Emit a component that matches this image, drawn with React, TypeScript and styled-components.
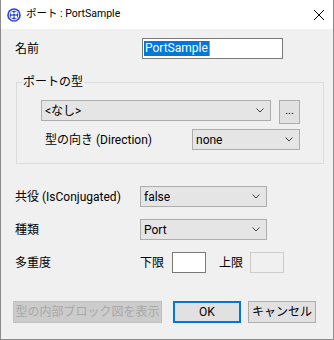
import styled, { createGlobalStyle } from "styled-components";

const GlobalStyle = createGlobalStyle`
    html, body {
        margin: 0;
        padding: 0;
        background: #ffffff;
    }
    * {
        box-sizing: border-box;
    }
`

const FONT = `Roboto, "Noto Sans CJK JP", sans-serif`;

const SWindow = styled.div`
        width: 334px;
        height: 340px;
        border: 1px solid #8c8c8c;
        border-top: none;
        background-color: #f0f0f0;
        font-family: ${FONT};
        font-size: 12px;
        color: #000;
        display: flex;
        flex-direction: column;
    `

const STitleBar = styled.div`
        height: 29px;
        background-color: #ffffff;
        display: flex;
        align-items: center;
        padding: 0 0 0 6px;

        .title {
            margin-left: 5px;
            font-size: 10.5px;
            line-height: 1;
        }

        .close {
            margin-left: auto;
            padding-right: 9px;
            display: flex;
            align-items: center;
        }
    `

const SBody = styled.div`
        flex: 1;
        padding: 9px 10px 0 14px;
        display: flex;
        flex-direction: column;
    `

const SRow = styled.div<{ $top: number; $labelWidth?: number }>`
        display: grid;
        grid-template-columns: ${p => p.$labelWidth ?? 125}px auto;
        align-items: center;
        margin-top: ${p => p.$top}px;
        height: 21px;
    `

const SLabel = styled.span`
        white-space: nowrap;
        line-height: 1;
    `

const STextBox = styled.div<{ $width: number; $disabled?: boolean }>`
        width: ${p => p.$width}px;
        height: 21px;
        border: 1px solid ${p => p.$disabled ? "#cccccc" : "#7a7a7a"};
        background-color: ${p => p.$disabled ? "#f0f0f0" : "#ffffff"};
        display: flex;
        align-items: center;
        padding-left: 1px;

        .selected {
            background-color: #0078d7;
            color: #ffffff;
            line-height: 15px;
            padding: 0 1px;
        }

        .caret {
            width: 1px;
            height: 15px;
            background-color: #f08a24;
        }
    `

const SCombo = styled.div<{ $width: number }>`
        width: ${p => p.$width}px;
        height: 21px;
        border: 1px solid #adadad;
        background-color: #e5e5e5;
        display: flex;
        align-items: center;
        padding: 0 6px 0 3px;

        .value {
            flex: 1;
            line-height: 1;
        }
    `

const SGroup = styled.fieldset`
        margin: 17px 0 0 1px;
        width: 308px;
        height: 88px;
        border: 1px solid #dcdcdc;
        padding: 0;

        legend {
            padding: 0 1px;
            margin-left: 5px;
            line-height: 1;
        }

        .inner {
            padding: 12px 0 0 24px;
        }

        .line {
            display: flex;
            align-items: flex-start;
        }

        .direction {
            display: flex;
            align-items: center;
            margin-top: 5px;
            height: 21px;

            & ${SLabel} {
                width: 151px;
                padding-left: 4px;
            }
        }
    `

const SButton = styled.div<{ $width: number; $variant?: "default" | "disabled" }>`
        width: ${p => p.$width}px;
        height: 22px;
        display: flex;
        align-items: center;
        justify-content: center;
        line-height: 1;
        background-color: ${p => p.$variant === "disabled" ? "#cccccc" : "#e1e1e1"};
        color: ${p => p.$variant === "disabled" ? "#a8a8a8" : "#000000"};
        border: ${p => p.$variant === "default" ? "2px solid #0078d7" : p.$variant === "disabled" ? "1px solid #bfbfbf" : "1px solid #adadad"};
    `

const SEllipsis = styled(SButton)`
        height: 24px;
        margin-left: 8px;
        padding-bottom: 4px;
        font-size: 11px;
    `

const SMultiplicity = styled.div`
        display: flex;
        align-items: center;

        .lower {
            width: 32px;
        }

        .upper {
            width: 31px;
            margin-left: 13px;
        }
    `

const SFooter = styled.div`
        display: flex;
        margin-top: 28px;
        margin-left: -2px;
        gap: 11px;

        & > :last-child {
            margin-left: -4px;
        }
    `

const Chevron = () => (
    <svg width="8" height="5" viewBox="0 0 8 5" style={{ marginLeft: "auto" }}>
        <path d="M0.5 0.5 L4 4 L7.5 0.5" fill="none" stroke="#404040" strokeWidth="1" />
    </svg>
)

const AppIcon = () => (
    <svg width="14" height="14" viewBox="0 0 14 14">
        <circle cx="7" cy="7" r="6.8" fill="#2e43e6" />
        <circle cx="7" cy="7" r="5.2" fill="#ffffff" />
        <circle cx="7" cy="7" r="4.3" fill="#2e43e6" />
        <circle cx="5.2" cy="5.2" r="1.4" fill="#ffffff" />
        <circle cx="8.8" cy="5.2" r="1.4" fill="#ffffff" />
        <circle cx="5.2" cy="8.8" r="1.4" fill="#ffffff" />
        <circle cx="8.8" cy="8.8" r="1.4" fill="#ffffff" />
    </svg>
)

const CloseIcon = () => (
    <svg width="10" height="10" viewBox="0 0 10 10">
        <path d="M0 0 L10 10 M10 0 L0 10" stroke="#000" strokeWidth="1" />
    </svg>
)

const App = () => {
    return (
        <>
            <GlobalStyle />
            <SWindow>
                <STitleBar>
                    <AppIcon />
                    <span className="title">ポート : PortSample</span>
                    <div className="close"><CloseIcon /></div>
                </STitleBar>
                <SBody>
                    <SRow $top={0} $labelWidth={127}>
                        <SLabel>名前</SLabel>
                        <STextBox $width={141}>
                            <span className="selected">PortSample</span>
                            <span className="caret" />
                        </STextBox>
                    </SRow>

                    <SGroup>
                        <legend>ポートの型</legend>
                        <div className="inner">
                            <div className="line">
                                <SCombo $width={230}>
                                    <span className="value">&lt;なし&gt;</span>
                                    <Chevron />
                                </SCombo>
                                <SEllipsis $width={21}>...</SEllipsis>
                            </div>
                            <div className="direction">
                                <SLabel>型の向き (Direction)</SLabel>
                                <SCombo $width={108}>
                                    <span className="value">none</span>
                                    <Chevron />
                                </SCombo>
                            </div>
                        </div>
                    </SGroup>

                    <SRow $top={22}>
                        <SLabel>共役 (IsConjugated)</SLabel>
                        <SCombo $width={127}>
                            <span className="value">false</span>
                            <Chevron />
                        </SCombo>
                    </SRow>
                    <SRow $top={12}>
                        <SLabel>種類</SLabel>
                        <SCombo $width={127}>
                            <span className="value">Port</span>
                            <Chevron />
                        </SCombo>
                    </SRow>
                    <SRow $top={12}>
                        <SLabel>多重度</SLabel>
                        <SMultiplicity>
                            <SLabel className="lower">下限</SLabel>
                            <STextBox $width={34} />
                            <SLabel className="upper">上限</SLabel>
                            <STextBox $width={34} $disabled />
                        </SMultiplicity>
                    </SRow>

                    <SFooter>
                        <SButton $width={149} $variant="disabled">型の内部ブロック図を表示</SButton>
                        <SButton $width={68} $variant="default">OK</SButton>
                        <SButton $width={68}>キャンセル</SButton>
                    </SFooter>
                </SBody>
            </SWindow>
        </>
    )
}

export default App;
